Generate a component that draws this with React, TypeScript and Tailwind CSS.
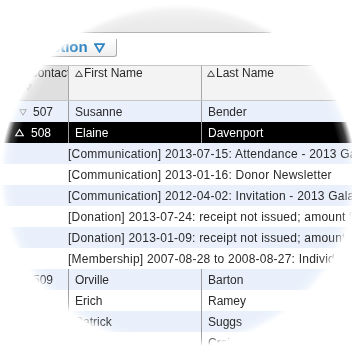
import React from "react";

type Row =
  | { kind: "contact"; id: string; first: string; last: string; selected?: boolean }
  | { kind: "detail"; text: string };

const rows: Row[] = [
  { kind: "contact", id: "507", first: "Susanne", last: "Bender" },
  { kind: "contact", id: "508", first: "Elaine", last: "Davenport", selected: true },
  { kind: "detail", text: "[Communication] 2013-07-15: Attendance - 2013 Gala" },
  { kind: "detail", text: "[Communication] 2013-01-16: Donor Newsletter" },
  { kind: "detail", text: "[Communication] 2012-04-02: Invitation - 2013 Gala" },
  { kind: "detail", text: "[Donation] 2013-07-24: receipt not issued; amount $250.00" },
  { kind: "detail", text: "[Donation] 2013-01-09: receipt not issued; amount $100.00" },
  { kind: "detail", text: "[Membership] 2007-08-28 to 2008-08-27: Individual" },
  { kind: "contact", id: "509", first: "Orville", last: "Barton" },
  { kind: "contact", id: "510", first: "Erich", last: "Ramey" },
  { kind: "contact", id: "511", first: "Patrick", last: "Suggs" },
  { kind: "contact", id: "512", first: "Harold", last: "Crain" },
];

// small outline triangles used as sort / expand markers
const TriUp = ({ className }: { className?: string }) => (
  <svg width="8" height="7" viewBox="0 0 8 7" className={className}>
    <path d="M4 0.8 L7.4 6.4 L0.6 6.4 Z" fill="none" stroke="currentColor" strokeWidth="1" />
  </svg>
);

const TriDown = ({ className, sw = 1 }: { className?: string; sw?: number }) => (
  <svg width="8" height="7" viewBox="0 0 8 7" className={className}>
    <path d="M0.7 0.7 L7.3 0.7 L4 6.2 Z" fill="none" stroke="currentColor" strokeWidth={sw} />
  </svg>
);

export default function App() {
  return (
    <div className="h-[350px] w-[352px] overflow-hidden bg-white font-['Liberation_Sans',Arial,sans-serif] text-[12px] text-[#2a2a2a]">
      {/* lens: content fades out at the rim */}
      <div className="h-full w-full [-webkit-mask-image:radial-gradient(ellipse_178px_172px_at_178px_176px,#000_92%,rgba(0,0,0,0.75)_96.5%,transparent_100%)] [mask-image:radial-gradient(ellipse_178px_172px_at_178px_176px,#000_92%,rgba(0,0,0,0.75)_96.5%,transparent_100%)]">
        {/* toolbar strip */}
        <div className="flex h-[33px] bg-gradient-to-b from-[#f2f2f2] to-[#e9e9e9]">
          <div className="w-[271px] border-b border-[#b4b4b4]" />
        </div>

        {/* action tab */}
        <div className="flex h-[32px] items-start bg-white pl-[36px] pt-[6px]">
          <div className="flex h-[18px] items-center gap-[6px] rounded-b-[3px] border border-t-0 border-[#ababab] bg-gradient-to-b from-white to-[#eeeeee] pl-[4px] pr-[11px] text-[15px] font-bold text-[#2d84c2]">
            <span>Action</span>
            <TriDown className="h-[10px] w-[11px] text-[#2d84c2]" sw={1.3} />
          </div>
        </div>

        {/* column header */}
        <div className="flex h-[36px] border-y border-[#c4c4c4] bg-[#f3f3f3]">
          <div className="flex w-[69px] shrink-0 flex-col overflow-hidden whitespace-nowrap border-r border-[#a8a8a8] bg-[#dfdfdf] pl-[29px] leading-[15px]">
            <span>Contact</span>
            <TriDown className="mt-[3px] -ml-[5px] text-[#9a9a9a]" />
          </div>
          <div className="flex w-[133px] shrink-0 items-start gap-[1px] border-r border-[#a8a8a8] pl-[6px] leading-[15px]">
            <TriUp className="mt-[4px] text-[#444]" />
            <span>First Name</span>
          </div>
          <div className="flex flex-1 items-start gap-[1px] pl-[5px] leading-[15px]">
            <TriUp className="mt-[4px] text-[#444]" />
            <span>Last Name</span>
          </div>
        </div>

        {/* body */}
        <div className="flex flex-col">
          {rows.map((row, i) => {
            const stripe = i % 2 === 0 ? "bg-[#e9f0fb]" : "bg-white";
            if (row.kind === "detail") {
              return (
                <div
                  key={i}
                  className={`flex h-[21px] items-center whitespace-nowrap pl-[68px] tracking-[0.22px] ${stripe}`}
                >
                  {row.text}
                </div>
              );
            }
            const sel = row.selected;
            return (
              <div
                key={i}
                className={`flex h-[21px] whitespace-nowrap ${sel ? "bg-black text-white" : stripe}`}
              >
                <div className="flex w-[69px] shrink-0 items-center border-r border-[#9c9c9c] pl-[15px]">
                  {sel ? (
                    <TriUp className="mr-[7px] h-[9px] w-[9px] text-white" />
                  ) : (
                    <TriDown className="ml-[4px] mr-[6px] mt-[1px] text-[#a0a0a0]" />
                  )}
                  <span>{row.id}</span>
                </div>
                <div className="flex w-[133px] shrink-0 items-center border-r border-[#9c9c9c] pl-[6px]">
                  {row.first}
                </div>
                <div className="flex flex-1 items-center pl-[6px]">{row.last}</div>
              </div>
            );
          })}
        </div>
      </div>
    </div>
  );
}
